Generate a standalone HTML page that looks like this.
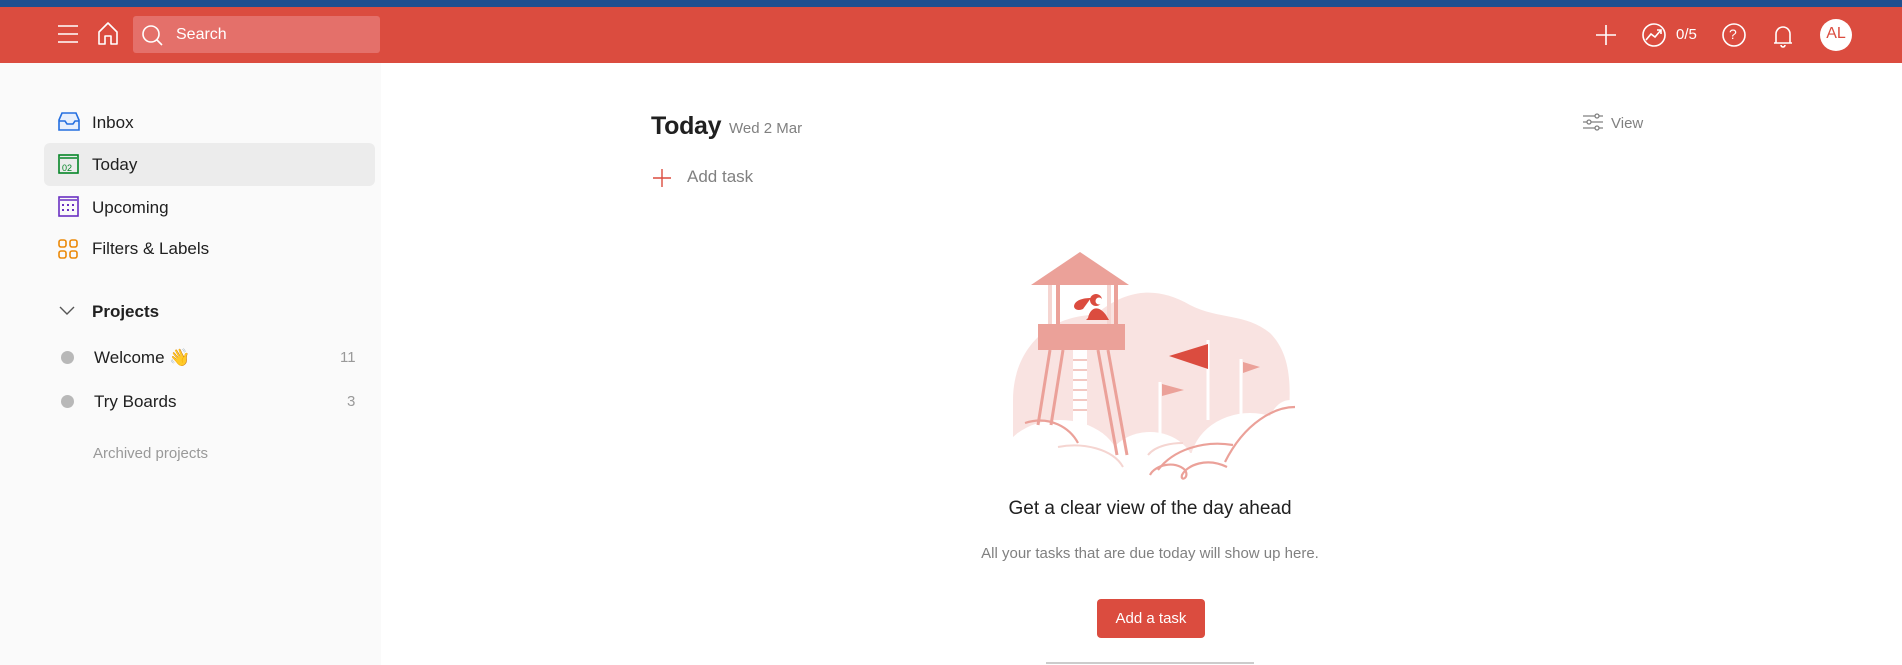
<!DOCTYPE html>
<html><head><meta charset="utf-8"><style>
*{margin:0;padding:0;box-sizing:border-box}
body{width:1902px;height:665px;overflow:hidden;background:#fff;font-family:"Liberation Sans",sans-serif;position:relative;color:#202020}
.a{position:absolute}
.topbar{left:0;top:0;width:1902px;height:7px;background:#1f4f8f}
.hdr{left:0;top:7px;width:1902px;height:56px;background:#db4c3f}
.side{left:0;top:63px;width:381px;height:602px;background:#fafafa}
.item{font-size:17px;color:#202020;line-height:20px}
.sel{left:44px;top:143px;width:331px;height:43px;background:#ececec;border-radius:6px}
</style></head><body>
<div class="a topbar"></div>
<div class="a hdr"></div>
<svg class="a" style="left:0;top:7px" width="1902" height="56" fill="none" stroke="#fff" stroke-width="1.6">
<path d="M58 19h20M58 27h20M58 35h20"/>
<path d="M99 37V25l9-9 9 9v12h-6v-8h-6v8z" stroke-linejoin="round"/>
<rect x="133" y="9" width="247" height="37" rx="3" fill="#e4706a" stroke="none"/>
<circle cx="151" cy="27" r="8"/><path d="M157 33l5 5"/>
<path d="M1606 18v20M1596 28h20"/>
<circle cx="1654" cy="28" r="11"/><path d="M1646 33l5-6 4 3 6-7M1657 23h4v4"/>
<circle cx="1734" cy="28" r="11"/>
<path d="M1774 36h18M1776 36v-9a7 7 0 0114 0v9M1781 38a2 2 0 004 0"/>
<circle cx="1836" cy="28" r="16" fill="#fff" stroke="none"/>
</svg>
<div class="a" style="left:176px;top:26px;font-size:16px;color:#fff">Search</div>
<div class="a" style="left:1676px;top:26px;font-size:15px;color:#fff">0/5</div>
<div class="a" style="left:1729px;top:26px;font-size:14px;color:#fff">?</div>
<div class="a" style="left:1823px;top:25px;font-size:16px;color:#db4c3f;width:26px;text-align:center">AL</div>
<div class="a side"></div>
<div class="a sel"></div>
<svg class="a" style="left:0;top:100px" width="100" height="170" fill="none" stroke-width="1.6">
<path d="M59 20l3-7h14l3 7v10H59z" stroke="#246fe0" fill="#e7effc"/><path d="M59 21h6l2 3h6l2-3h4" stroke="#246fe0"/>
<rect x="59" y="55" width="19" height="18" stroke="#058527"/><path d="M60 58h17" stroke="#058527"/>
<text x="62" y="71" font-size="9" fill="#058527" stroke="none" font-family="Liberation Sans">02</text>
<rect x="59" y="97" width="19" height="19" stroke="#692fc2"/><path d="M60 100h17" stroke="#692fc2"/>
<g fill="#692fc2" stroke="none"><rect x="62" y="104" width="2" height="2"/><rect x="67" y="104" width="2" height="2"/><rect x="72" y="104" width="2" height="2"/><rect x="62" y="109" width="2" height="2"/><rect x="67" y="109" width="2" height="2"/><rect x="72" y="109" width="2" height="2"/></g>
<g stroke="#eb8909"><rect x="59" y="140" width="7" height="7" rx="2"/><rect x="70" y="140" width="7" height="7" rx="2"/><rect x="59" y="151" width="7" height="7" rx="2"/><rect x="70" y="151" width="7" height="7" rx="2"/></g>
</svg>
<div class="a item" style="left:92px;top:113px">Inbox</div>
<div class="a item" style="left:92px;top:155px">Today</div>
<div class="a item" style="left:92px;top:198px">Upcoming</div>
<div class="a item" style="left:92px;top:239px">Filters &amp; Labels</div>
<svg class="a" style="left:58px;top:305px" width="20" height="12" fill="none" stroke="#555" stroke-width="1.4"><path d="M2 2l7 7 7-7"/></svg>
<div class="a item" style="left:92px;top:302px;font-weight:bold">Projects</div>
<div class="a" style="left:61px;top:351px;width:13px;height:13px;border-radius:50%;background:#b8b8b8"></div>
<div class="a" style="left:61px;top:395px;width:13px;height:13px;border-radius:50%;background:#b8b8b8"></div>
<div class="a item" style="left:94px;top:348px">Welcome <span style="color:#f2c037">👋</span></div>
<div class="a item" style="left:94px;top:392px">Try Boards</div>
<div class="a" style="left:340px;top:349px;font-size:15px;color:#999">11</div>
<div class="a" style="left:347px;top:393px;font-size:15px;color:#999">3</div>
<div class="a" style="left:93px;top:445px;font-size:15px;color:#999">Archived projects</div>
<div class="a" style="left:651px;top:112px;font-size:25px;font-weight:bold;color:#202020;letter-spacing:-0.3px">Today</div>
<div class="a" style="left:729px;top:120px;font-size:15px;color:#808080">Wed 2 Mar</div>
<svg class="a" style="left:650px;top:166px" width="24" height="24" stroke="#db4c3f" stroke-width="1.4"><path d="M12 3v18M3 12h18"/></svg>
<div class="a" style="left:687px;top:167px;font-size:17px;color:#808080">Add task</div>
<svg class="a" style="left:1582px;top:113px" width="24" height="20" fill="none" stroke="#808080" stroke-width="1.3"><path d="M1 3h20M1 9h20M1 15h20"/><circle cx="15" cy="3" r="2" fill="#fff"/><circle cx="7" cy="9" r="2" fill="#fff"/><circle cx="15" cy="15" r="2" fill="#fff"/></svg>
<div class="a" style="left:1611px;top:115px;font-size:15px;color:#808080">View</div>
<svg class="a" style="left:0;top:0" width="1902" height="665">
<path d="M1013 400c0-50 35-85 82-85 30-25 60-30 95-10 30 15 55 8 80 28 20 20 22 50 18 90v30h-275z" fill="#f9e3e1"/>
<path d="M1080 252l-49 33h98z" fill="#eba199"/>
<g fill="#f5d5d1"><rect x="1048" y="285" width="4" height="40"/><rect x="1107" y="285" width="4" height="40"/></g>
<g fill="#eba199"><rect x="1056" y="285" width="4" height="40"/><rect x="1114" y="285" width="4" height="40"/></g>
<path d="M1088 318c2-10 10-14 18-3l3 5h-23z" fill="#db4c3f"/>
<circle cx="1096" cy="300" r="6" fill="#db4c3f"/><circle cx="1099" cy="301" r="3.5" fill="#fff"/>
<path d="M1091 298c-8 0-16 2-17 8 0 4 5 5 9 3z" fill="#db4c3f"/>
<rect x="1038" y="324" width="87" height="26" fill="#eba199"/>
<rect x="1073" y="350" width="14" height="80" fill="#fff"/>
<g stroke="#f3c8c2" stroke-width="2"><path d="M1073 360h14M1073 370h14M1073 380h14M1073 390h14M1073 400h14M1073 410h14"/></g>
<g stroke="#fff" stroke-width="3"><path d="M1160 382v60M1208 340v80M1241 359v55"/></g>
<path d="M1169 356l39-12v25z" fill="#db4c3f"/>
<path d="M1162 384l22 6-22 6z" fill="#eba199"/><path d="M1243 362l17 5-17 6z" fill="#eba199"/>
<g fill="#fff">
<ellipse cx="1060" cy="465" rx="60" ry="45"/>
<ellipse cx="1150" cy="470" rx="45" ry="38"/>
<ellipse cx="1250" cy="465" rx="60" ry="52"/>
<ellipse cx="1290" cy="440" rx="25" ry="40"/>
<rect x="1000" y="470" width="310" height="30"/>
</g>
<g stroke="#eba199" stroke-width="3"><path d="M1050 350l-12 75M1063 350l-12 75M1098 350l19 105M1108 350l19 105"/></g>
<g fill="none" stroke="#eba199" stroke-width="2.2">
<path d="M1025 423c25-8 45 5 53 20"/><path d="M1158 470c15-20 45-30 75-25"/>
<path d="M1150 475c5-10 25-15 35-5 5 8-5 12-3 5 5-10 25-18 45-8"/>
<path d="M1225 462c20-40 50-55 70-55"/>
</g>
<g fill="none" stroke="#f5d5d1" stroke-width="2"><path d="M1058 447c25-5 55 2 65 20"/><path d="M1148 455c8-10 25-12 35-12"/></g>
</svg>
<div class="a" style="left:0;top:498px;width:2300px;text-align:center;font-size:19px;color:#202020">Get a clear view of the day ahead</div>
<div class="a" style="left:0;top:545px;width:2300px;text-align:center;font-size:15px;color:#808080">All your tasks that are due today will show up here.</div>
<div class="a" style="left:1097px;top:599px;width:108px;height:39px;background:#db4c3f;border-radius:4px;color:#fff;font-size:15px;text-align:center;line-height:39px">Add a task</div>
<div class="a" style="left:1046px;top:662px;width:208px;height:2px;background:#ccc"></div>
</body></html>
